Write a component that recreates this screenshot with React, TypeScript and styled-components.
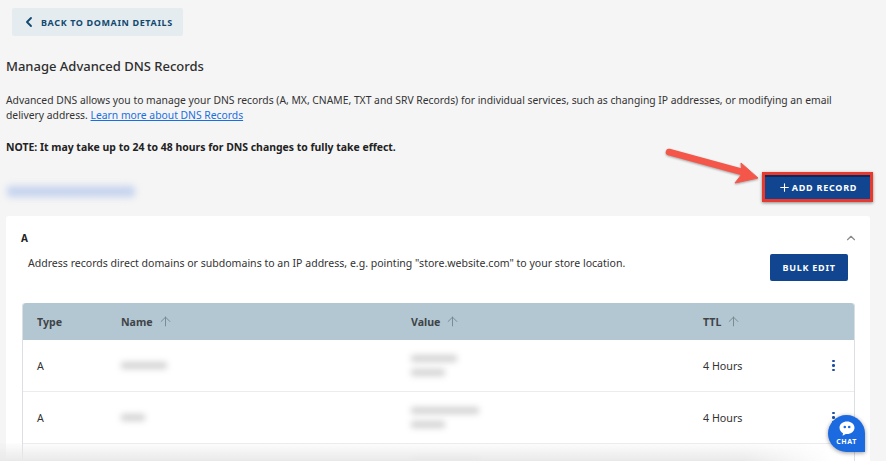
import React from "react";
import styled, { createGlobalStyle } from "styled-components";
import { ChevronLeft, ChevronUp, ArrowUp, Plus } from "lucide-react";

const Global = createGlobalStyle`
  html, body {
    margin: 0;
    height: 461px;
    overflow: hidden;
    background: #f5f5f5;
    font-family: "Noto Sans", "Open Sans", sans-serif;
    color: #2b2b2b;
  }
`;

const Page = styled.div`
  position: relative;
  width: 886px;
  height: 461px;
  overflow: hidden;
  padding: 8px 16px 0 6px;
  box-sizing: border-box;
`;

const BackButton = styled.div`
  display: flex;
  align-items: center;
  gap: 4px;
  width: 171px;
  height: 28px;
  margin-left: 6px;
  padding-left: 9px;
  box-sizing: border-box;
  background: #e5ecef;
  border-radius: 2px;
  color: #12496f;
  font-size: 9px;
  font-weight: 700;
  letter-spacing: 0.62px;
  white-space: nowrap;
`;

const Title = styled.h1`
  margin: 20px 0 0;
  font-size: 13px;
  line-height: 20px;
  font-weight: 500;
  color: #2e2e2e;
`;

const Intro = styled.p`
  margin: 17px 0 0;
  font-size: 10.34px;
  line-height: 15px;
  color: #333;
`;

const Learn = styled.a`
  color: #1a6fe0;
  text-decoration: underline;
`;

const Note = styled.p`
  margin: 17px 0 0;
  font-size: 10.45px;
  line-height: 15px;
  font-weight: 700;
  color: #222;
`;

const ActionRow = styled.div`
  display: flex;
  justify-content: space-between;
  align-items: center;
  height: 30px;
  margin: 17px -3px 0 0;
`;

const BlurredDomain = styled.div`
  width: 128px;
  height: 11px;
  margin: 8px 0 0 1px;
  background: #c5d3ee;
  border-radius: 3px;
  filter: blur(3.5px);
`;

const AddRecord = styled.div`
  display: flex;
  align-items: center;
  justify-content: center;
  gap: 1px;
  width: 111px;
  height: 30px;
  box-sizing: border-box;
  border: 3px solid #e7392e;
  background: #11458f;
  box-shadow: 0 1px 3px rgba(0, 0, 0, 0.45), inset 0 2px 0 #0a2a5c;
  color: #fff;
  font-size: 9px;
  font-weight: 700;
  letter-spacing: 0.75px;
  white-space: nowrap;
`;

const Card = styled.section`
  margin-top: 14px;
  width: 864px;
  height: 300px;
  padding: 16px 15px 0 15px;
  box-sizing: border-box;
  background: #fff;
  border-radius: 3px 3px 0 0;
`;

const CardHead = styled.div`
  display: flex;
  justify-content: space-between;
  align-items: center;
  height: 12px;
  margin-right: -3px;
  font-size: 10px;
  font-weight: 700;
  color: #222;
`;

const DescRow = styled.div`
  display: flex;
  justify-content: space-between;
  align-items: center;
  margin-top: 10px;
  padding: 0 7px 0 7px;
  height: 27px;
`;

const Desc = styled.div`
  padding-bottom: 10px;
  font-size: 10.55px;
  color: #333;
  white-space: nowrap;
`;

const BulkEdit = styled.div`
  display: flex;
  align-items: center;
  justify-content: center;
  width: 78px;
  height: 27px;
  background: #11458f;
  border-radius: 2px;
  color: #fff;
  font-size: 9px;
  font-weight: 700;
  letter-spacing: 0.75px;
`;

const Table = styled.div`
  margin-top: 22px;
  margin-left: 1px;
  border-left: 1px solid #d9dfe3;
  border-right: 1px solid #d9dfe3;
  border-radius: 3px 3px 0 0;
`;

const Cols = `
  display: grid;
  grid-template-columns: 84px 290px 292px 1fr 22px;
  align-items: center;
  padding-left: 14px;
`;

const HeadRow = styled.div`
  ${Cols}
  height: 37px;
  background: #b3c7d2;
  border-radius: 3px 3px 0 0;
  font-size: 10.6px;
  font-weight: 700;
  color: #404448;
`;

const HeadCell = styled.div`
  display: flex;
  align-items: center;
  gap: 5px;
  color: #404448;
  svg {
    color: #78868e;
  }
`;

const Row = styled.div`
  ${Cols}
  height: 51px;
  border-bottom: 1px solid #ececec;
  font-size: 10.7px;
  color: #333;
`;

const Blurred = styled.div<{ $w: number }>`
  width: ${(p) => p.$w}px;
  height: 7px;
  background: #d2d2d2;
  border-radius: 2px;
  filter: blur(3px);
`;

const BlurStack = styled.div`
  display: flex;
  flex-direction: column;
  gap: 7px;
`;

const Kebab = styled.div`
  display: flex;
  flex-direction: column;
  gap: 2px;
  align-items: center;
  width: 3px;
  span {
    width: 2.5px;
    height: 2.5px;
    border-radius: 50%;
    background: #1c4fa3;
  }
`;

const ArrowOverlay = styled.svg`
  position: absolute;
  left: 660px;
  top: 140px;
  filter: drop-shadow(0 1px 1px rgba(0, 0, 0, 0.35));
`;

const Fade = styled.div`
  position: absolute;
  left: 0;
  right: 0;
  top: 443px;
  height: 18px;
  background: linear-gradient(to bottom, rgba(236, 236, 236, 0.1), #e9e9e9);
  mask-image: linear-gradient(to right, #000 84%, transparent 94%);
`;

const Chat = styled.div`
  position: absolute;
  left: 828px;
  top: 415px;
  width: 37px;
  height: 37px;
  display: flex;
  flex-direction: column;
  align-items: center;
  gap: 1px;
  padding-top: 6px;
  box-sizing: border-box;
  background: #1b6ae0;
  border-radius: 50% 50% 0 50%;
  box-shadow: 0 1px 4px rgba(0, 0, 0, 0.4);
  color: #fff;
  font-size: 7px;
  font-weight: 700;
  letter-spacing: 0.6px;
  line-height: 9px;
`;

// the third row only peeks in at the bottom edge, just its value shows
const rows = [
  { name: 46, value: [46, 34], full: true },
  { name: 24, value: [68, 34], full: true },
  { name: 30, value: [70, 34], full: false },
];

export default function App() {
  return (
    <Page>
      <Global />
      <BackButton>
        <ChevronLeft size={16} strokeWidth={2.8} color="#12496f" />
        BACK TO DOMAIN DETAILS
      </BackButton>
      <Title>Manage Advanced DNS Records</Title>
      <Intro>
        Advanced DNS allows you to manage your DNS records (A, MX, CNAME, TXT and SRV Records) for individual services, such as changing IP addresses, or modifying an email delivery address. <Learn>Learn more about DNS Records</Learn>
      </Intro>
      <Note>NOTE: It may take up to 24 to 48 hours for DNS changes to fully take effect.</Note>
      <ActionRow>
        <BlurredDomain />
        <AddRecord>
          <Plus size={13} strokeWidth={2} />
          ADD RECORD
        </AddRecord>
      </ActionRow>
      <Card>
        <CardHead>
          A
          <ChevronUp size={14} color="#8a8a8a" />
        </CardHead>
        <DescRow>
          <Desc>Address records direct domains or subdomains to an IP address, e.g. pointing "store.website.com" to your store location.</Desc>
          <BulkEdit>BULK EDIT</BulkEdit>
        </DescRow>
        <Table>
          <HeadRow>
            <HeadCell>Type</HeadCell>
            <HeadCell>
              Name <ArrowUp size={15} strokeWidth={1.5} />
            </HeadCell>
            <HeadCell>
              Value <ArrowUp size={15} strokeWidth={1.5} />
            </HeadCell>
            <HeadCell>
              TTL <ArrowUp size={15} strokeWidth={1.5} />
            </HeadCell>
            <div />
          </HeadRow>
          {rows.map((r, i) => (
            <Row key={i}>
              <div>{r.full && "A"}</div>
              {r.full ? <Blurred $w={r.name} /> : <div />}
              <BlurStack>
                {r.value.map((w, j) => (
                  <Blurred key={j} $w={w} />
                ))}
              </BlurStack>
              <div>{r.full && "4 Hours"}</div>
              {r.full && (
                <Kebab>
                  <span />
                  <span />
                  <span />
                </Kebab>
              )}
            </Row>
          ))}
        </Table>
      </Card>
      <ArrowOverlay width="104" height="50" viewBox="0 0 104 50">
        <path d="M9 12 L86 33" stroke="#f4574a" strokeWidth="6.5" strokeLinecap="round" fill="none" />
        <path d="M81 23 L98 38 L75 43 L82 34 Z" fill="#f4574a" stroke="#f4574a" strokeWidth="1" strokeLinejoin="round" />
      </ArrowOverlay>
      <Fade />
      <Chat>
        <svg width="16" height="15" viewBox="0 0 16 15">
          <path d="M8 0.5 C12 0.5 15.5 3 15.5 6.7 C15.5 10.4 12 13 8 13 L6.8 13 L3.6 14.8 L4 12.2 C2 11 0.5 9.1 0.5 6.7 C0.5 3 4 0.5 8 0.5 Z" fill="#fff" />
          <circle cx="5.8" cy="6" r="1.3" fill="#1b6ae0" />
          <circle cx="10.2" cy="6" r="1.3" fill="#1b6ae0" />
        </svg>
        CHAT
      </Chat>
    </Page>
  );
}
